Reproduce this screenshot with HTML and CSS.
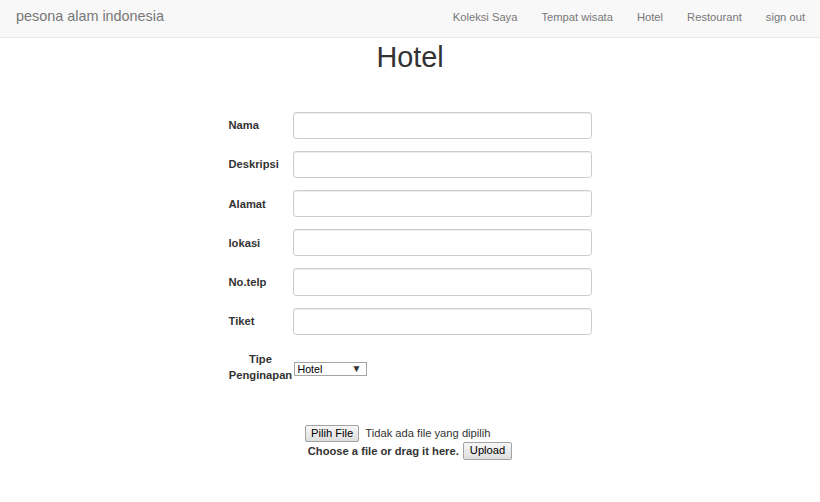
FILE: index.html
```html
<!DOCTYPE html>
<html lang="id">
<head>
<meta charset="utf-8">
<title>Hotel</title>
<link rel="stylesheet" href="styles.css">
</head>
<body>
<nav class="navbar">
  <a class="brand" href="#">pesona alam indonesia</a>
  <ul class="nav-links">
    <li><a href="#">Koleksi Saya</a></li>
    <li><a href="#">Tempat wisata</a></li>
    <li><a href="#">Hotel</a></li>
    <li><a href="#">Restourant</a></li>
    <li><a href="#">sign out</a></li>
  </ul>
</nav>
<h1 class="title">Hotel</h1>
<form class="form">
  <div class="row"><label class="lbl">Nama</label><input class="field" type="text"></div>
  <div class="row"><label class="lbl">Deskripsi</label><input class="field" type="text"></div>
  <div class="row"><label class="lbl">Alamat</label><input class="field" type="text"></div>
  <div class="row"><label class="lbl">lokasi</label><input class="field" type="text"></div>
  <div class="row"><label class="lbl">No.telp</label><input class="field" type="text"></div>
  <div class="row"><label class="lbl">Tiket</label><input class="field" type="text"></div>
  <div class="row row-type">
    <label class="lbl lbl-center">Tipe<br>Penginapan</label>
    <span class="select-wrap">
      <select class="select"><option>Hotel</option></select>
      <span class="select-arrow">&#9660;</span>
    </span>
  </div>
</form>
<div class="upload">
  <div class="file-line">
    <button class="btn" type="button">Pilih File</button>
    <span class="file-status">Tidak ada file yang dipilih</span>
  </div>
  <div class="drop-line">
    <span class="drop-text">Choose a file or drag it here.</span>
    <button class="btn btn-upload" type="button">Upload</button>
  </div>
</div>
</body>
</html>
```

FILE: styles.css
```css
* { box-sizing: border-box; }
html, body { margin: 0; padding: 0; }
body {
  font-family: "Liberation Sans", Arial, sans-serif;
  font-size: 11.2px;
  line-height: 16px;
  color: #333;
  background: #fff;
}
.navbar {
  height: 38px;
  background: #f8f8f8;
  border-bottom: 1px solid #e7e7e7;
  display: flex;
  justify-content: space-between;
  align-items: baseline;
  padding: 8px 15px 0 16px;
}
.brand {
  font-size: 14.4px;
  line-height: 16px;
  color: #777;
  text-decoration: none;
}
.nav-links {
  list-style: none;
  margin: 0;
  padding: 0;
  display: flex;
  gap: 24px;
  align-items: baseline;
}
.nav-links a {
  font-size: 11.2px;
  line-height: 16px;
  color: #777;
  text-decoration: none;
}
.title {
  margin: 4px 0 0;
  font-size: 28.8px;
  line-height: 1.1;
  font-weight: 500;
  text-align: center;
  color: #333;
}
.form {
  width: 363px;
  margin: 38px auto 0;
  display: flex;
  flex-direction: column;
  gap: 12px;
}
.row {
  display: flex;
  align-items: center;
}
.lbl {
  width: 64px;
  flex: none;
  font-weight: bold;
  font-size: 11.2px;
  line-height: 16px;
  color: #333;
}
.lbl-center {
  text-align: center;
  width: 64px;
}
.field {
  width: 299px;
  height: 27.2px;
  border: 1px solid #ccc;
  border-radius: 3.2px;
  box-shadow: inset 0 1px 1px rgba(0,0,0,0.075);
  font-family: inherit;
  font-size: 11.2px;
  padding: 4.8px 9.6px;
  background: #fff;
}
.row-type {
  margin-top: 4px;
  align-items: flex-end;
}
.select-wrap {
  position: relative;
  display: inline-block;
  margin-bottom: 7px;
  margin-left: 1px;
}
.select {
  -webkit-appearance: none;
  appearance: none;
  width: 73px;
  height: 14px;
  border: 1px solid #a6a6a6;
  border-radius: 0;
  background: #fff;
  font-family: inherit;
  font-size: 10.67px;
  line-height: 12px;
  padding: 0 0 0 3px;
  color: #000;
  display: block;
}
.select-arrow {
  position: absolute;
  right: 5px;
  top: 1px;
  font-size: 10px;
  line-height: 12px;
  color: #333;
  pointer-events: none;
}
.upload {
  margin-top: 42px;
  display: flex;
  flex-direction: column;
  align-items: center;
}
.file-line {
  width: 210px;
  display: flex;
  align-items: center;
  gap: 6px;
}
.btn {
  font-family: inherit;
  font-size: 11.2px;
  line-height: 13px;
  height: 17px;
  padding: 1px 5px;
  color: #000;
  background: linear-gradient(#f6f6f6, #dedede);
  border: 1px solid #a3a3a3;
  border-radius: 2px;
}
.file-status {
  font-size: 11.2px;
  color: #333;
}
.drop-line {
  display: flex;
  align-items: center;
  gap: 4px;
}
.drop-text {
  font-weight: bold;
  font-size: 11.2px;
}
.btn-upload {
  height: 18px;
  padding: 1px 6px;
}
```
